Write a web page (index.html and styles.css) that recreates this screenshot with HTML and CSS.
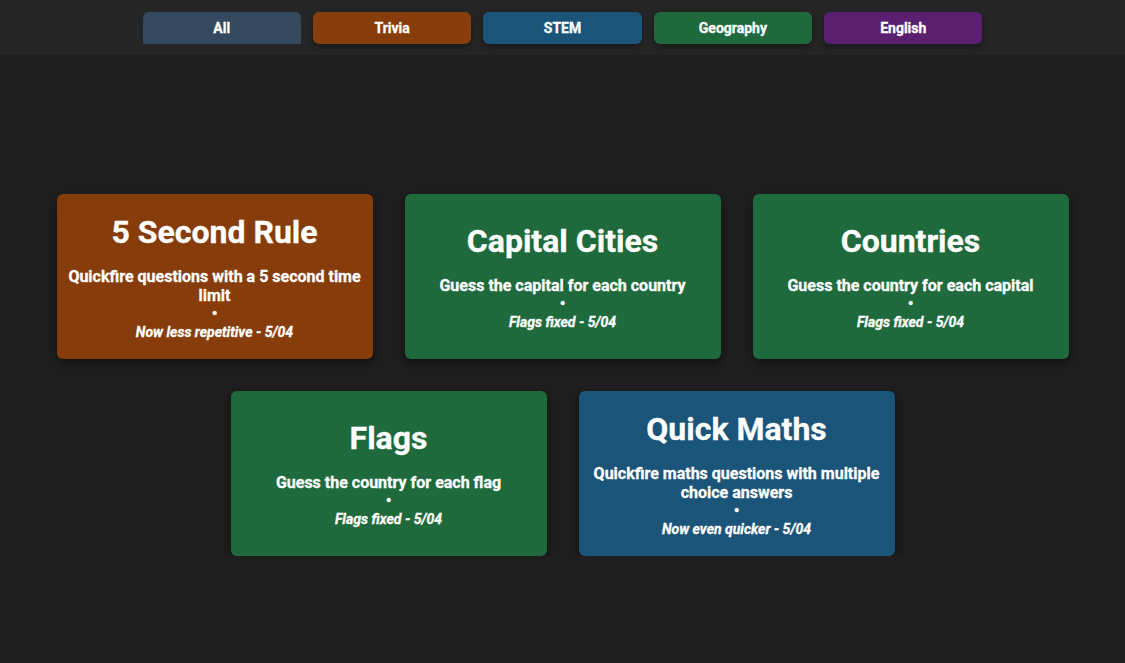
FILE: index.html
```html
<!DOCTYPE html>
<html lang="en">
<head>
<meta charset="utf-8">
<title>Games</title>
<link rel="stylesheet" href="styles.css">
</head>
<body>
<header class="topbar">
  <nav class="filters">
    <button class="filter filter-all active">All</button>
    <button class="filter filter-trivia">Trivia</button>
    <button class="filter filter-stem">STEM</button>
    <button class="filter filter-geo">Geography</button>
    <button class="filter filter-english">English</button>
  </nav>
</header>
<main class="games">
  <div class="card card-trivia">
    <h2 class="card-title">5 Second Rule</h2>
    <p class="card-desc">Quickfire questions with a 5 second time limit</p>
    <span class="card-dot">•</span>
    <p class="card-note">Now less repetitive - 5/04</p>
  </div>
  <div class="card card-geo">
    <h2 class="card-title">Capital Cities</h2>
    <p class="card-desc">Guess the capital for each country</p>
    <span class="card-dot">•</span>
    <p class="card-note">Flags fixed - 5/04</p>
  </div>
  <div class="card card-geo">
    <h2 class="card-title">Countries</h2>
    <p class="card-desc">Guess the country for each capital</p>
    <span class="card-dot">•</span>
    <p class="card-note">Flags fixed - 5/04</p>
  </div>
  <div class="card card-geo">
    <h2 class="card-title">Flags</h2>
    <p class="card-desc">Guess the country for each flag</p>
    <span class="card-dot">•</span>
    <p class="card-note">Flags fixed - 5/04</p>
  </div>
  <div class="card card-stem">
    <h2 class="card-title">Quick Maths</h2>
    <p class="card-desc">Quickfire maths questions with multiple choice answers</p>
    <span class="card-dot">•</span>
    <p class="card-note">Now even quicker - 5/04</p>
  </div>
</main>
</body>
</html>
```
FILE: styles.css
```css
* { box-sizing: border-box; }
html, body {
  margin: 0;
  padding: 0;
  background: #1e1e1e;
  font-family: Roboto, "Liberation Sans", sans-serif;
  color: #fff;
}
.topbar {
  height: 55px;
  background: #252525;
  padding-top: 12px;
}
.filters {
  display: flex;
  justify-content: center;
  gap: 12px;
}
.filter {
  width: 158.4px;
  height: 32px;
  border: 0;
  border-radius: 6px;
  color: #fff;
  font-family: Roboto, "Liberation Sans", sans-serif;
  font-size: 14px;
  font-weight: 700;
  -webkit-text-stroke: 0.3px #fff;
  box-shadow: 0 3px 6px rgba(0,0,0,0.35);
  padding: 0;
}
.filter-all { background: #34495e; }
.filter-all.active { border-radius: 6px 6px 0 0; box-shadow: none; }
.filter-trivia { background: #873c0b; }
.filter-stem { background: #1b5479; }
.filter-geo { background: #1e6a3c; }
.filter-english { background: #5a1f6e; }

.games {
  max-width: 1012px;
  margin: 139px auto 0;
  display: flex;
  flex-wrap: wrap;
  justify-content: center;
  gap: 32px;
}
.card {
  width: 316px;
  height: 165px;
  border-radius: 6px;
  box-shadow: 0 4px 8px rgba(0,0,0,0.45);
  display: flex;
  flex-direction: column;
  justify-content: center;
  align-items: center;
  text-align: center;
  padding: 0 10px;
  -webkit-text-stroke: 0.3px #fff;
}
.card-trivia { background: #873c0b; }
.card-geo { background: #1e6a3c; }
.card-stem { background: #1b5479; }
.card-title {
  margin: 0 0 16px;
  font-size: 32px;
  line-height: 38px;
  font-weight: 700;
}
.card-desc {
  margin: 0;
  font-size: 16px;
  line-height: 19px;
  font-weight: 700;
}
.card-dot {
  font-size: 16px;
  line-height: 18px;
  font-weight: 700;
}
.card-note {
  margin: 0;
  font-size: 14px;
  line-height: 18px;
  font-weight: 700;
  font-style: italic;
}
```
